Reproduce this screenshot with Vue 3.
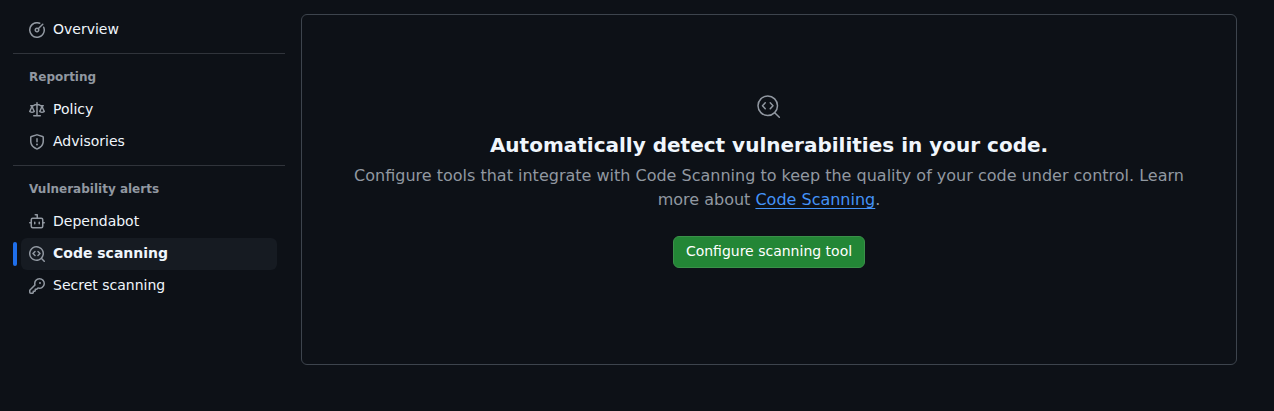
<script setup>
const icons = {
  meter: 'M8 1.5a6.5 6.5 0 1 0 6.016 4.035.75.75 0 0 1 1.388-.57 8 8 0 1 1-4.37-4.37.75.75 0 0 1-.569 1.389A6.473 6.473 0 0 0 8 1.5Zm6.28.22a.75.75 0 0 1 0 1.06l-4.063 4.064a2.5 2.5 0 1 1-1.06-1.06L13.22 1.72a.75.75 0 0 1 1.06 0ZM7 8a1 1 0 1 0 2 0 1 1 0 0 0-2 0Z',
  law: 'M8.75.75V2h.985c.304 0 .603.08.867.231l1.29.736c.038.022.08.033.124.033h2.234a.75.75 0 0 1 0 1.5h-.427l2.111 4.692a.75.75 0 0 1-.154.838l-.53-.53.529.531-.001.002-.002.002-.006.006-.006.005-.01.01-.045.04c-.21.176-.441.327-.686.45C14.556 10.78 13.88 11 13 11a4.498 4.498 0 0 1-2.023-.454 3.544 3.544 0 0 1-.686-.45l-.045-.04-.016-.015-.006-.006-.004-.004v-.001a.75.75 0 0 1-.154-.838L12.178 4.5h-.162c-.305 0-.604-.079-.868-.231l-1.29-.736a.245.245 0 0 0-.124-.033H8.75V13h2.5a.75.75 0 0 1 0 1.5h-6.5a.75.75 0 0 1 0-1.5h2.5V3.5h-.984a.245.245 0 0 0-.124.033l-1.289.737c-.265.15-.564.23-.869.23h-.162l2.112 4.692a.75.75 0 0 1-.154.838l-.53-.53.529.531-.001.002-.002.002-.006.006-.016.015-.045.04c-.21.176-.441.327-.686.45C4.556 10.78 3.88 11 3 11a4.498 4.498 0 0 1-2.023-.454 3.544 3.544 0 0 1-.686-.45l-.045-.04-.016-.015-.006-.006-.004-.004v-.001a.75.75 0 0 1-.154-.838L2.178 4.5H1.75a.75.75 0 0 1 0-1.5h2.234a.249.249 0 0 0 .125-.033l1.288-.737c.265-.15.564-.23.869-.23h.984V.75a.75.75 0 0 1 1.5 0Zm2.945 8.477c.285.135.718.273 1.305.273s1.02-.138 1.305-.273L13 6.327Zm-10 0c.285.135.718.273 1.305.273s1.02-.138 1.305-.273L3 6.327Z',
  shield: 'M7.467.133a1.748 1.748 0 0 1 1.066 0l5.25 1.68A1.75 1.75 0 0 1 15 3.48V7c0 1.566-.32 3.182-1.303 4.682-.983 1.498-2.585 2.813-5.032 3.855a1.697 1.697 0 0 1-1.33 0c-2.447-1.042-4.049-2.357-5.032-3.855C1.32 10.182 1 8.566 1 7V3.48a1.75 1.75 0 0 1 1.217-1.667Zm.61 1.429a.25.25 0 0 0-.153 0l-5.25 1.68a.25.25 0 0 0-.174.238V7c0 1.358.275 2.666 1.057 3.86.784 1.194 2.121 2.34 4.366 3.297a.196.196 0 0 0 .154 0c2.245-.956 3.582-2.104 4.366-3.298C13.225 9.666 13.5 8.36 13.5 7V3.48a.251.251 0 0 0-.174-.237l-5.25-1.68ZM8.75 4.75v3a.75.75 0 0 1-1.5 0v-3a.75.75 0 0 1 1.5 0ZM9 10.5a1 1 0 1 1-2 0 1 1 0 0 1 2 0Z',
  bot: 'M5.75 7.5a.75.75 0 0 1 .75.75v1.5a.75.75 0 0 1-1.5 0v-1.5a.75.75 0 0 1 .75-.75Zm5.25.75a.75.75 0 0 0-1.5 0v1.5a.75.75 0 0 0 1.5 0v-1.5Z M6.25 0h2A.75.75 0 0 1 9 .75V3.5h3.25a2.25 2.25 0 0 1 2.25 2.25V8h.75a.75.75 0 0 1 0 1.5h-.75v2.75a2.25 2.25 0 0 1-2.25 2.25h-8.5a2.25 2.25 0 0 1-2.25-2.25V9.5H.75a.75.75 0 0 1 0-1.5h.75V5.75A2.25 2.25 0 0 1 3.75 3.5H7.5v-2H6.25a.75.75 0 0 1 0-1.5ZM3 5.75v6.5c0 .414.336.75.75.75h8.5a.75.75 0 0 0 .75-.75v-6.5a.75.75 0 0 0-.75-.75h-8.5a.75.75 0 0 0-.75.75Z',
  codescan: 'M8.47 4.97a.75.75 0 0 0 0 1.06L9.94 7.5 8.47 8.97a.75.75 0 1 0 1.06 1.06l2-2a.75.75 0 0 0 0-1.06l-2-2a.75.75 0 0 0-1.06 0ZM6.53 6.03a.75.75 0 0 0-1.06-1.06l-2 2a.75.75 0 0 0 0 1.06l2 2a.75.75 0 1 0 1.06-1.06L5.06 7.5l1.47-1.47Z M12.246 13.307a7.501 7.501 0 1 1 1.06-1.06l2.474 2.473a.749.749 0 1 1-1.06 1.06l-2.474-2.473ZM1.5 7.5a6.002 6.002 0 0 0 3.608 5.504 6.002 6.002 0 0 0 6.486-1.117.748.748 0 0 1 .292-.293A6 6 0 1 0 1.5 7.5Z',
  key: 'M10.5 0a5.499 5.499 0 1 1-1.288 10.848l-.932.932a.749.749 0 0 1-.53.22H7v.75a.749.749 0 0 1-.22.53l-.5.5a.749.749 0 0 1-.53.22H5v.75a.749.749 0 0 1-.22.53l-.5.5a.749.749 0 0 1-.53.22h-2A1.75 1.75 0 0 1 0 14.25v-2c0-.199.079-.389.22-.53l4.932-4.932A5.5 5.5 0 0 1 10.5 0Zm-4 5.5c-.001.431.069.86.205 1.269a.75.75 0 0 1-.181.768L1.5 12.56v1.69c0 .138.112.25.25.25h1.69l.06-.06v-1.19a.75.75 0 0 1 .75-.75h1.19l.06-.06v-1.19a.75.75 0 0 1 .75-.75h1.19l1.023-1.025a.75.75 0 0 1 .768-.18A4 4 0 1 0 6.5 5.5ZM11 6a1 1 0 1 1 0-2 1 1 0 0 1 0 2Z',
}

const groups = [
  { items: [{ label: 'Overview', icon: 'meter' }] },
  {
    title: 'Reporting',
    items: [
      { label: 'Policy', icon: 'law' },
      { label: 'Advisories', icon: 'shield' },
    ],
  },
  {
    title: 'Vulnerability alerts',
    items: [
      { label: 'Dependabot', icon: 'bot' },
      { label: 'Code scanning', icon: 'codescan', active: true },
      { label: 'Secret scanning', icon: 'key' },
    ],
  },
]
</script>

<template>
  <div class="page">
    <nav class="sidebar">
      <section v-for="(group, i) in groups" :key="i" class="group">
        <h3 v-if="group.title" class="group-title">{{ group.title }}</h3>
        <a v-for="item in group.items" :key="item.label" class="item" :class="{ active: item.active }">
          <svg class="icon" width="16" height="16" viewBox="0 0 16 16" fill="currentColor">
            <path :d="icons[item.icon]" />
          </svg>
          <span>{{ item.label }}</span>
        </a>
      </section>
    </nav>

    <main class="blankslate">
      <svg class="hero" width="24" height="24" viewBox="0 0 24 24" fill="none" stroke="currentColor" stroke-width="1.5" stroke-linecap="round" stroke-linejoin="round">
        <circle cx="10.75" cy="10.75" r="9.75" />
        <path d="M17.7 17.7l4.6 4.6M8.25 7.75l-2.75 3 2.75 3M13.25 7.75l2.75 3-2.75 3" />
      </svg>
      <h1>Automatically detect vulnerabilities in your code.</h1>
      <p>Configure tools that integrate with Code Scanning to keep the quality of your code under control. Learn more about <a class="link">Code Scanning</a>.</p>
      <button type="button">Configure scanning tool</button>
    </main>
  </div>
</template>

<style>
body {
  background: #0d1117;
}
</style>

<style scoped>
.page {
  box-sizing: border-box;
  height: 411px;
  padding: 14px 37px 0 13px;
  display: flex;
  align-items: flex-start;
  gap: 16px;
  background: #0d1117;
  color: #f0f6fc;
  font: 14px/20px "DejaVu Sans", sans-serif;
}
.sidebar {
  width: 272px;
  flex: none;
}
.group + .group {
  margin-top: 7px;
  padding-top: 8px;
  border-top: 1px solid #30343b;
}
.group-title {
  margin: 0;
  padding: 6px 16px 8px;
  font-size: 12px;
  line-height: 18px;
  font-weight: 700;
  color: #9198a1;
}
.item {
  position: relative;
  display: flex;
  gap: 8px;
  height: 32px;
  box-sizing: border-box;
  margin: 0 8px;
  padding: 5px 8px 7px;
  border-radius: 6px;
}
.icon {
  flex: none;
  margin-top: 3px;
  color: #9198a1;
}
.item.active {
  background: #161b22;
  font-weight: 700;
}
.item.active::before {
  content: "";
  position: absolute;
  left: -8px;
  top: 4px;
  width: 4px;
  height: 24px;
  border-radius: 6px;
  background: #1f6feb;
}
.blankslate {
  flex: 1;
  height: 351px;
  box-sizing: border-box;
  padding: 80px 31px 0;
  border: 1px solid #3d444d;
  border-radius: 6px;
  display: flex;
  flex-direction: column;
  align-items: center;
  text-align: center;
}
.hero {
  color: #9198a1;
}
h1 {
  margin: 11px 0 4px;
  font-size: 20px;
  line-height: 30px;
  font-weight: 700;
}
p {
  margin: 0;
  font-size: 16px;
  line-height: 24px;
  color: #9198a1;
}
.link {
  color: #4493f8;
  text-decoration: underline;
  text-underline-offset: 3.2px;
}
button {
  height: 32px;
  margin-top: 24px;
  padding: 0 12px 2px;
  border: 1px solid #3a9149;
  border-radius: 6px;
  background: #238636;
  color: #fff;
  font: 14px/20px "DejaVu Sans", sans-serif;
}
</style>
